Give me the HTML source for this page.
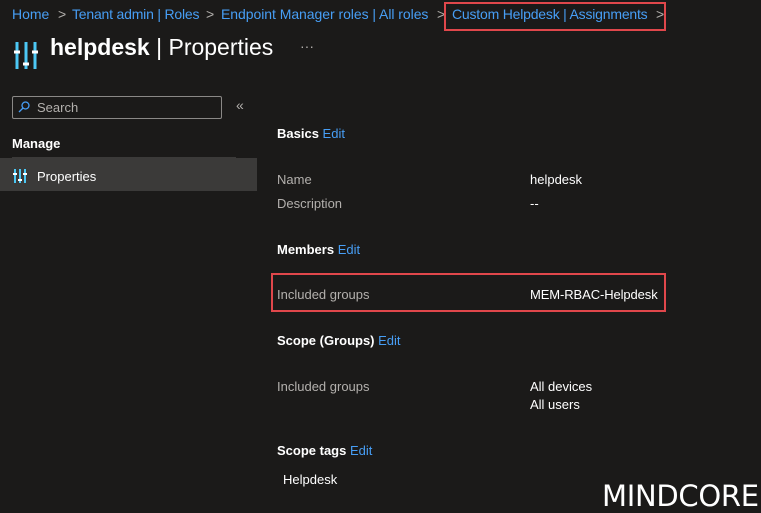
<!DOCTYPE html>
<html><head><style>
body{margin:0;width:761px;height:509px;background:#1b1a19;font-family:"Liberation Sans",sans-serif;color:#fff;position:relative;overflow:hidden;font-size:13px}
.a{position:absolute;white-space:nowrap}
.l{color:#479ef5}
.g{color:#b3b0ad}
.b{font-weight:bold}
.red{position:absolute;border:2px solid #e0474b}
.bc{font-size:14px;top:6px}
</style></head><body>
<div class="a l bc" style="left:12px">Home</div>
<div class="a g bc" style="left:58px">&gt;</div>
<div class="a l bc" style="left:72px;letter-spacing:-0.2px">Tenant admin | Roles</div>
<div class="a g bc" style="left:206px">&gt;</div>
<div class="a l bc" style="left:221px;letter-spacing:-0.05px">Endpoint Manager roles | All roles</div>
<div class="a g bc" style="left:437px">&gt;</div>
<div class="a l bc" style="left:452px;letter-spacing:-0.2px">Custom Helpdesk | Assignments</div>
<div class="a g bc" style="left:656px">&gt;</div>
<div class="red" style="left:444px;top:2px;width:218px;height:25px"></div>
<svg class="a" style="left:14px;top:40px" width="26" height="30"><g stroke="#4cc8f5" stroke-width="3"><line x1="3" y1="2" x2="3" y2="29"/><line x1="12" y1="2" x2="12" y2="29"/><line x1="21" y1="2" x2="21" y2="29"/></g><g stroke="#fff" stroke-width="3"><line x1="0" y1="12" x2="6" y2="12"/><line x1="9" y1="24" x2="15" y2="24"/><line x1="18" y1="12" x2="24" y2="12"/></g></svg>
<div class="a" style="left:50px;top:34px;font-size:23px;letter-spacing:0px"><b>helpdesk</b> | Properties</div>
<div class="a g" style="left:300px;top:38px;font-size:14px">···</div>
<div class="a" style="left:12px;top:96px;width:208px;height:21px;border:1px solid #8a8886;border-radius:2px"></div>
<svg class="a" style="left:18px;top:101px" width="12" height="12"><circle cx="7.5" cy="4.5" r="3.5" stroke="#479ef5" fill="none" stroke-width="1.3"/><line x1="5" y1="7" x2="1" y2="11" stroke="#479ef5" stroke-width="1.3"/></svg>
<div class="a g" style="left:37px;top:100px">Search</div>
<div class="a g" style="left:236px;top:97px;font-size:14px">«</div>
<div class="a b" style="left:12px;top:136px">Manage</div>
<div class="a" style="left:12px;top:157px;width:224px;height:1px;background:#3b3a39"></div>
<div class="a" style="left:0;top:158px;width:257px;height:33px;background:#3b3a39"></div>
<svg class="a" style="left:13px;top:169px" width="14" height="14"><g stroke="#4cc8f5" stroke-width="2"><line x1="2" y1="0" x2="2" y2="14"/><line x1="7" y1="0" x2="7" y2="14"/><line x1="12" y1="0" x2="12" y2="14"/></g><g stroke="#fff" stroke-width="2"><line x1="0" y1="5" x2="4" y2="5"/><line x1="5" y1="11" x2="9" y2="11"/><line x1="10" y1="5" x2="14" y2="5"/></g></svg>
<div class="a" style="left:37px;top:169px">Properties</div>
<div class="a" style="left:277px;top:126px"><b>Basics</b> <span class="l">Edit</span></div>
<div class="a g" style="left:277px;top:172px">Name</div><div class="a" style="left:530px;top:172px">helpdesk</div>
<div class="a g" style="left:277px;top:196px">Description</div><div class="a" style="left:530px;top:196px">--</div>
<div class="a" style="left:277px;top:242px"><b>Members</b> <span class="l">Edit</span></div>
<div class="red" style="left:271px;top:273px;width:391px;height:35px"></div>
<div class="a g" style="left:277px;top:287px">Included groups</div><div class="a" style="left:530px;top:287px;letter-spacing:-0.1px">MEM-RBAC-Helpdesk</div>
<div class="a" style="left:277px;top:333px"><b>Scope (Groups)</b> <span class="l">Edit</span></div>
<div class="a g" style="left:277px;top:379px">Included groups</div><div class="a" style="left:530px;top:379px">All devices</div>
<div class="a" style="left:530px;top:397px">All users</div>
<div class="a" style="left:277px;top:443px"><b>Scope tags</b> <span class="l">Edit</span></div>
<div class="a" style="left:283px;top:472px">Helpdesk</div>
<div class="a" style="left:602px;top:479px;font-family:'DejaVu Sans',sans-serif;font-size:29px;letter-spacing:-0.3px;color:#fff">MINDCORE</div>
</body></html>
